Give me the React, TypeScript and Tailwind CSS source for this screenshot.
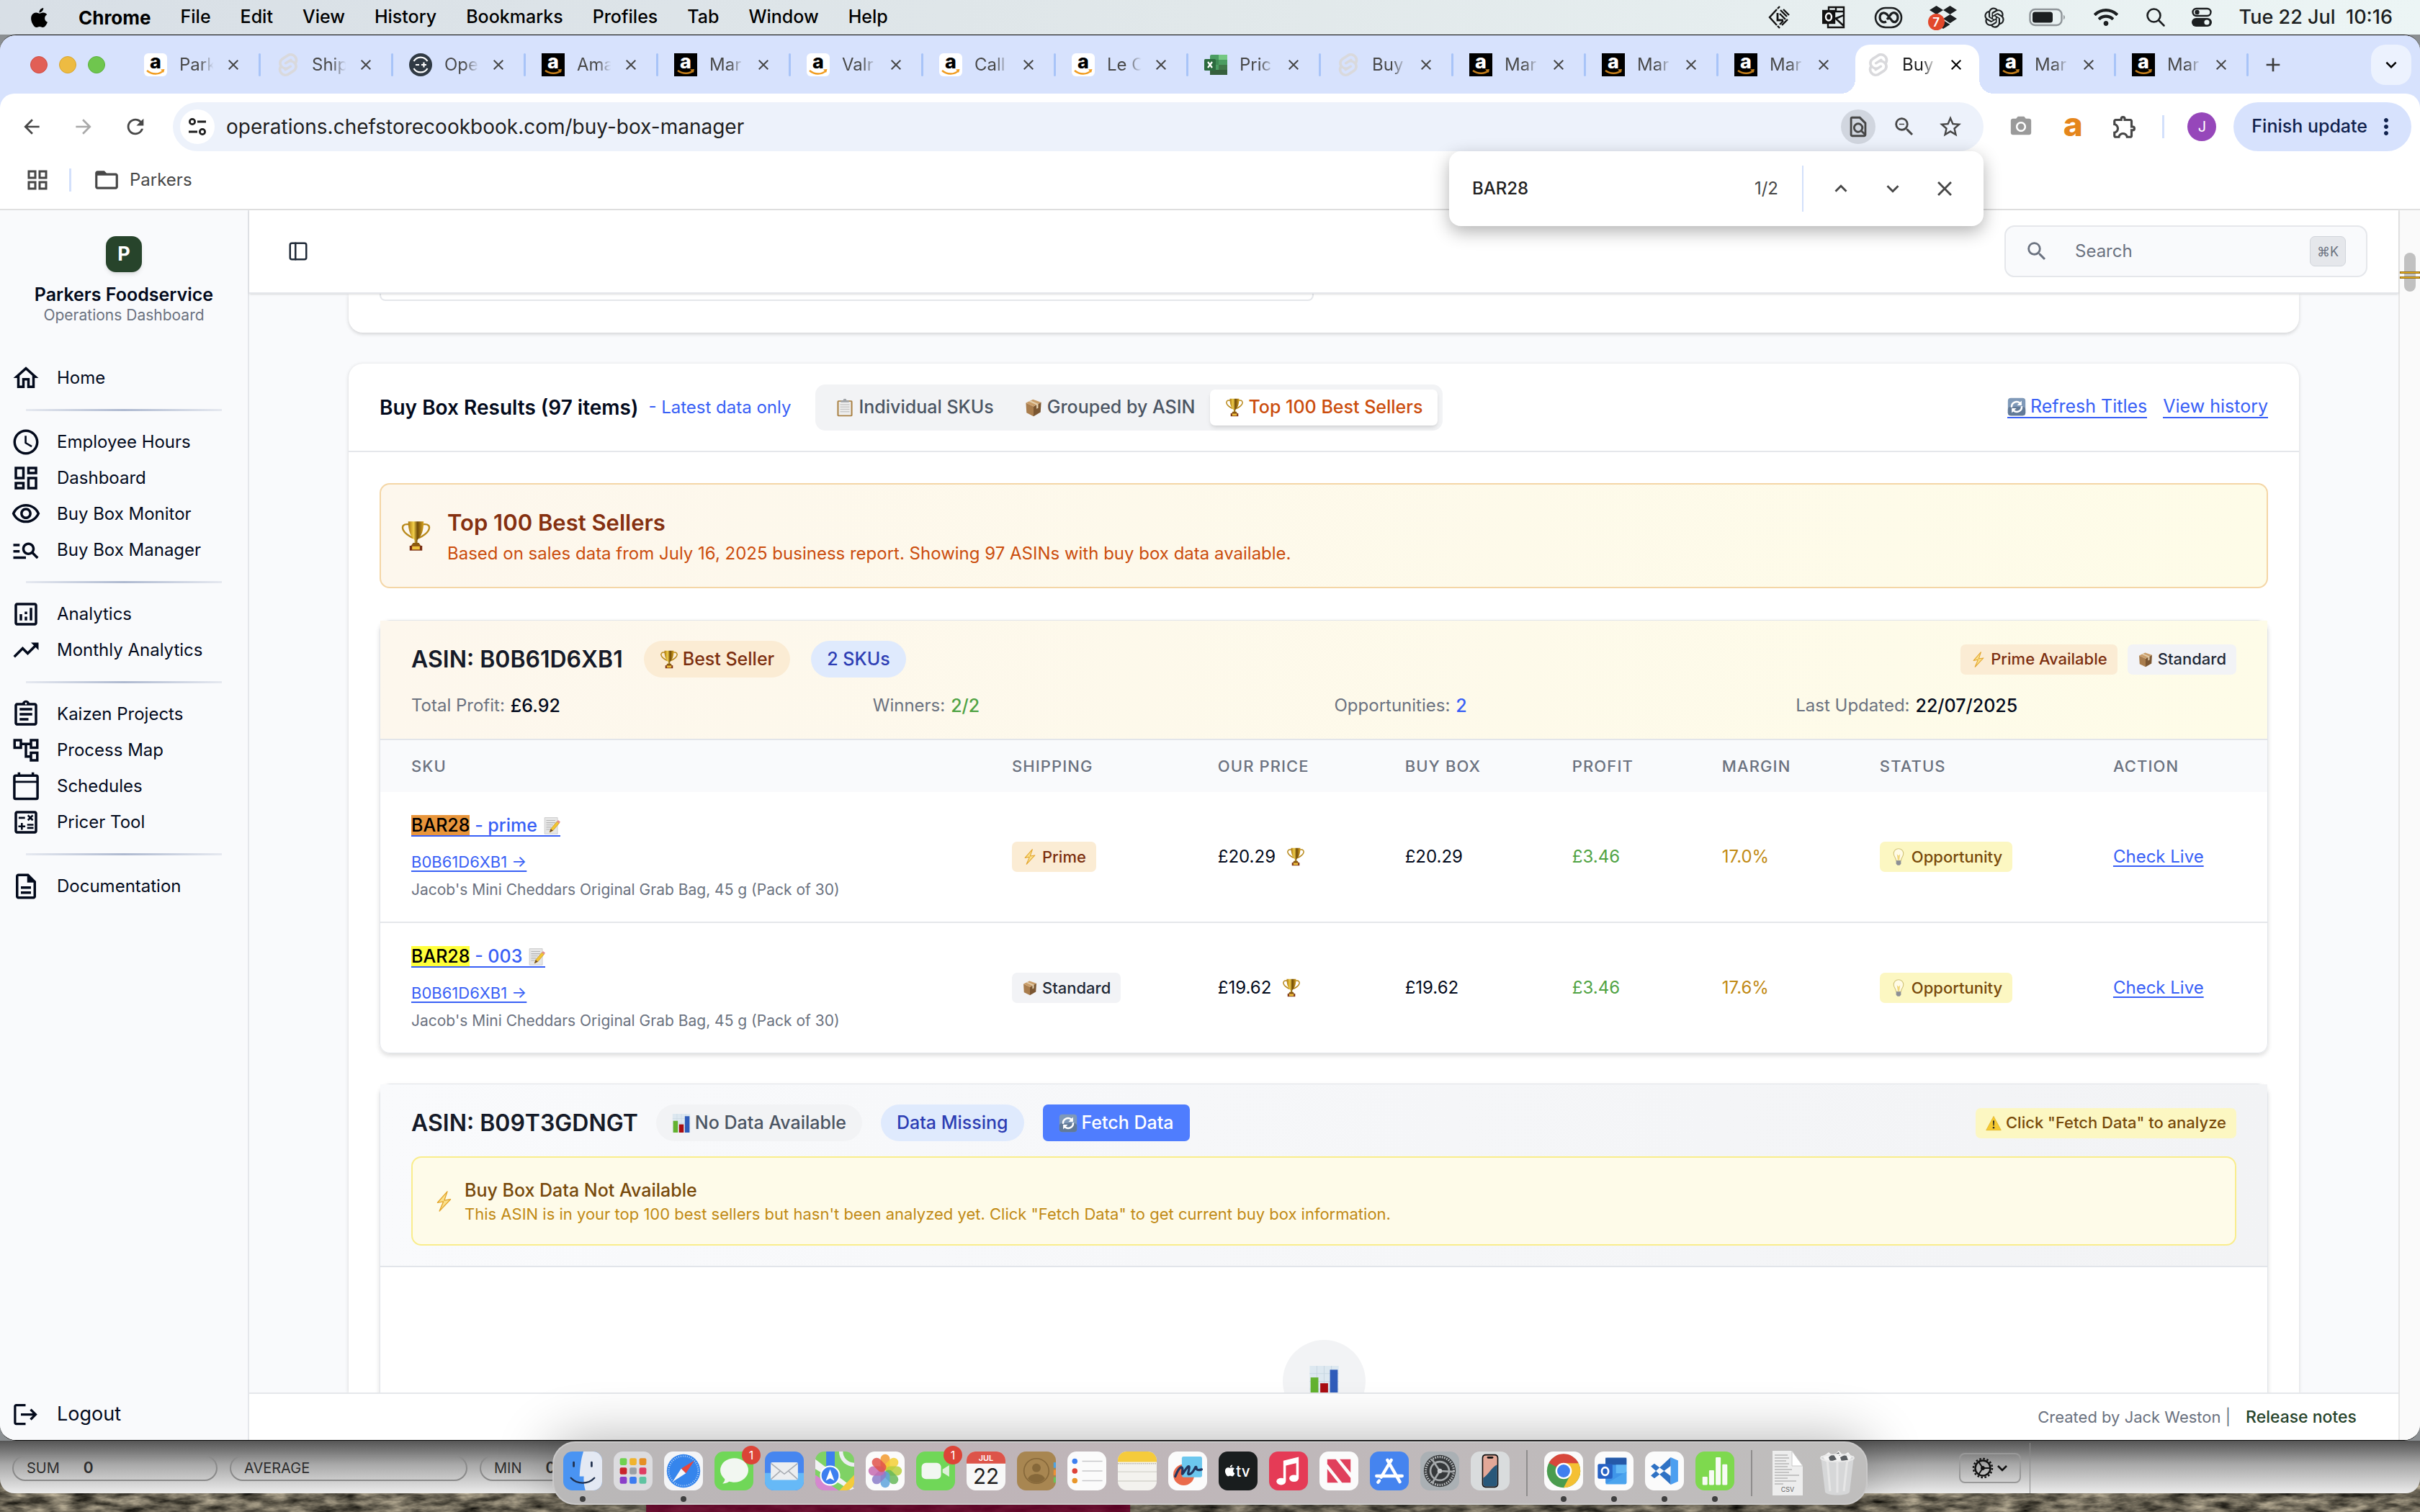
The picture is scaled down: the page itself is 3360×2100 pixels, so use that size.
import React from "react";
import {
  MdOutlineHome, MdOutlineSchedule, MdOutlineDashboard, MdOutlineVisibility, MdManageSearch,
  MdOutlineAnalytics, MdTrendingUp, MdOutlineAssignment, MdOutlineAccountTree,
  MdOutlineCalculate, MdOutlineDescription, MdLogout, MdArrowBack, MdArrowForward, MdRefresh,
  MdOutlineFindInPage, MdZoomOut, MdStarOutline, MdPhotoCamera, MdOutlineExtension, MdMoreVert,
  MdExpandMore, MdExpandLess, MdClose, MdAdd, MdFolderOpen, MdOutlineGridView, MdSearch,
} from "react-icons/md";
import { FaApple, FaDropbox, FaWifi } from "react-icons/fa";
import { AiOutlineOpenAI } from "react-icons/ai";
import { SiSvelte } from "react-icons/si";
import { PanelLeft } from "lucide-react";

/* ---------- pictograms ---------- */

type IconProps = { className?: string };

const Trophy = ({ className = "size-[26px]" }: IconProps) => (
  <svg viewBox="0 0 32 32" className={className} aria-hidden="true">
    <defs>
      <linearGradient id="cup" x1="0" x2="1" y1="0" y2="0">
        <stop offset="0" stopColor="#a8740c" /><stop offset=".35" stopColor="#f2cf4a" />
        <stop offset=".6" stopColor="#6f4a08" /><stop offset="1" stopColor="#d9a520" />
      </linearGradient>
    </defs>
    <path d="M9 4C3 3 1 6 3 10c2 4 6 6 10 8M23 4c6-1 8 2 6 6-2 4-6 6-10 8" fill="none" stroke="#b98a1c" strokeWidth="1.8" />
    <path d="M8 1h16c0 9-2 15-6.500 19v4h-3v-4C10 16 8 10 8 1z" fill="url(#cup)" />
    <path d="M13 23h6l2 3H11z" fill="#8a5a10" />
    <path d="M9.500 26h13v5h-13z" fill="#7a2e12" />
    <path d="M12 26.500h8v3.500h-8z" fill="#edc23c" />
  </svg>
);

const Box = ({ className = "size-[26px]" }: IconProps) => (
  <svg viewBox="0 0 32 32" className={className} aria-hidden="true">
    <path d="M3 8l13 6v17L4 25z" fill="#a97d4d" />
    <path d="M29 7L16 14v17l12-7z" fill="#7b5631" />
    <path d="M3 8l12-6 14 5-13 7z" fill="#c99d69" />
    <path d="M8 5.500l13 5.800v7l3-1.500v-7L11 4z" fill="#e3cfae" />
  </svg>
);

const Bolt = ({ className = "size-[22px]" }: IconProps) => (
  <svg viewBox="0 0 32 32" className={className} aria-hidden="true">
    <path d="M21 1L6 18l9-1.500L9 31l17-18-9.500 1.500z" fill="#fae08a" stroke="#e3a52c" strokeWidth="1.500" strokeLinejoin="round" />
  </svg>
);

const Clipboard = ({ className = "size-[26px]" }: IconProps) => (
  <svg viewBox="0 0 32 32" className={className} aria-hidden="true">
    <rect x="3" y="4" width="26" height="27" rx="2" fill="#a98043" />
    <rect x="5.500" y="6" width="21" height="23" fill="#eeeeee" />
    <path d="M8 11h16M8 15h16M8 19h16M8 23h16" stroke="#c9c9c9" strokeWidth="1.800" />
    <path d="M9 7V4h4a3 3 0 016 0h4v3z" fill="#9fa3a8" />
  </svg>
);

const RefreshTile = ({ className = "size-[26px]" }: IconProps) => (
  <svg viewBox="0 0 32 32" className={className} aria-hidden="true">
    <rect x="1" y="1" width="30" height="30" rx="5" fill="#7f99b8" />
    <rect x="1" y="16" width="30" height="15" rx="5" fill="#627a97" />
    <path d="M7.500 17a8.500 8.500 0 0114-7.500M24.500 15a8.500 8.500 0 01-14 7.500" fill="none" stroke="#fff" strokeWidth="3" />
    <path d="M24.500 5.500v8h-8zM7.500 26.500v-8h8z" fill="#fff" />
  </svg>
);

const Memo = ({ className = "size-[26px]" }: IconProps) => (
  <svg viewBox="0 0 32 32" className={className} aria-hidden="true">
    <path d="M4 2h23v29H4z" fill="#e6e6e6" stroke="#c4c4c4" />
    <path d="M7 7h16M7 11h16M7 15h12M7 19h9M7 23h7" stroke="#b5b5b5" strokeWidth="1.400" />
    <path d="M13 28l2-6L26 9l4 3-11 13z" fill="#f3c532" stroke="#b98a1c" strokeWidth=".8" />
    <path d="M26 9l2-2.500 4 3L30 12z" fill="#e58b8b" />
    <path d="M13 28l2-6 4 3z" fill="#6b4b2a" />
  </svg>
);

const Bulb = ({ className = "size-[24px]" }: IconProps) => (
  <svg viewBox="0 0 32 32" className={className} aria-hidden="true">
    <path d="M16 1a9 9 0 00-9 9c0 5 4 8 4.500 13h9C21 18 25 15 25 10a9 9 0 00-9-9z" fill="#fffbe6" stroke="#d2c47a" strokeWidth="1.500" />
    <path d="M13 11l3 3 3-3-1.500 11h-3z" fill="#f0d67c" />
    <path d="M11.500 23h9v6l-2.500 2.500h-4L11.500 29z" fill="#8d9096" />
  </svg>
);

const BarChart = ({ className = "size-[26px]" }: IconProps) => (
  <svg viewBox="0 0 32 32" className={className} aria-hidden="true">
    <rect x="1" y="0" width="30" height="32" fill="#dde8f0" />
    <path d="M1 8h30M1 16h30M1 24h30M8.500 0v32M16 0v32M23.500 0v32" stroke="#c9d7e2" strokeWidth=".8" />
    <path d="M2 12h8v20H2z" fill="#63b22f" />
    <path d="M12 18h8v14h-8z" fill="#a90d12" />
    <path d="M22 4h8v28h-8z" fill="#2f5cba" />
  </svg>
);

const Warning = ({ className = "size-[22px]" }: IconProps) => (
  <svg viewBox="0 0 32 32" className={className} aria-hidden="true">
    <path d="M16 2l15 28H1z" fill="#f5c92f" stroke="#e0ae1d" strokeLinejoin="round" />
    <path d="M14.500 11h3l-.6 10h-1.800z" fill="#222" /><circle cx="16" cy="25" r="1.800" fill="#222" />
  </svg>
);

const CalendarOutline = ({ className }: IconProps) => (
  <svg viewBox="0 0 24 24" className={className} fill="none" stroke="currentColor" strokeWidth="2" aria-hidden="true">
    <rect x="2.800" y="3.500" width="18.400" height="18.500" rx="1" />
    <path d="M3 8.500h18" strokeWidth="1.600" /><path d="M6.500 1v3M17.500 1v3" />
  </svg>
);

/* ---------- tab favicons ---------- */

const AmazonLight = () => (
  <svg viewBox="0 0 32 32" className="size-8 shrink-0 overflow-visible">
    <rect width="32" height="32" rx="6" fill="#fff" />
    <text x="16" y="21" textAnchor="middle" fontFamily="Inter, sans-serif" fontWeight="800" fontSize="27" fill="#000">a</text>
    <path d="M4 24c7 6 17 6 23 0" fill="none" stroke="#f19c1f" strokeWidth="2.400" />
    <path d="M23 22.500l5.500-.5-1.500 5z" fill="#f19c1f" />
  </svg>
);

const AmazonDark = () => (
  <svg viewBox="0 0 32 32" className="size-8 shrink-0 overflow-visible">
    <rect width="32" height="32" fill="#000" />
    <text x="16" y="21" textAnchor="middle" fontFamily="Inter, sans-serif" fontWeight="800" fontSize="27" fill="#fff">a</text>
    <path d="M5 24c7 5 16 5 22 0" fill="none" stroke="#c47f1c" strokeWidth="2.600" />
    <path d="M22 22.500l6-.5-1.500 5z" fill="#c47f1c" />
  </svg>
);

const SvelteMark = () => <SiSvelte className="size-8 shrink-0 text-[#d9d9dc]" />;

const OpsMark = () => (
  <svg viewBox="0 0 32 32" className="size-8 shrink-0">
    <circle cx="16" cy="16" r="16" fill="#303a44" />
    <path d="M6.500 11a11 11 0 0119 0M6.500 21a11 11 0 0019 0" fill="none" stroke="#fff" strokeWidth="2.200" />
    <path d="M9 16h5M17 16h7M20.500 12.500v7" stroke="#fff" strokeWidth="2.200" />
  </svg>
);

const ExcelMark = () => (
  <svg viewBox="0 0 32 32" className="size-8 shrink-0">
    <rect x="8" y="2" width="24" height="28" rx="2" fill="#4c9d62" />
    <path d="M20 2h12v7H20z" fill="#75c883" /><path d="M8 9h12v7H8z" fill="#3f8a54" />
    <path d="M20 16h12v7H20z" fill="#41784a" /><path d="M8 23h24v7H8z" fill="#365f3c" />
    <rect x="0" y="8" width="16" height="16" rx="1.500" fill="#2c6b3e" />
    <path d="M5 12l6 8M11 12l-6 8" stroke="#fff" strokeWidth="2.200" />
  </svg>
);

const tabs = [
  { t: "Park", I: AmazonLight }, { t: "Ship", I: SvelteMark }, { t: "Ope", I: OpsMark },
  { t: "Ama", I: AmazonDark }, { t: "Mar", I: AmazonDark }, { t: "Valr", I: AmazonLight },
  { t: "Call", I: AmazonLight }, { t: "Le C", I: AmazonLight }, { t: "Pric", I: ExcelMark },
  { t: "Buy", I: SvelteMark }, { t: "Mar", I: AmazonDark }, { t: "Mar", I: AmazonDark },
  { t: "Mar", I: AmazonDark }, { t: "Buy", I: SvelteMark, active: true },
  { t: "Mar", I: AmazonDark }, { t: "Mar", I: AmazonDark },
];

/* ---------- system menu bar ---------- */

const MenuBar = () => (
  <header className="flex h-12 shrink-0 items-center bg-linear-to-r from-[#d8dfe6] via-[#e1e8ea] to-[#ecf5f5] pr-[38px] pl-[39px] text-[25px] text-black">
    <FaApple className="size-[31px]" />
    <nav className="ml-[39px] flex items-center gap-[41px]">
      <button className="text-[26px] font-bold">Chrome</button>
      {["File", "Edit", "View", "History", "Bookmarks", "Profiles", "Tab", "Window", "Help"].map((m) => (
        <button key={m} className="font-medium">{m}</button>
      ))}
    </nav>
    <div className="ml-auto flex items-center text-[#1c1f21]">
      <svg viewBox="0 0 32 32" className="size-8" fill="none" stroke="#111" strokeWidth="2.400">
        <path d="M13 5L3 16l10 11M17 1l-3 3M17 31l-3-3M22 5l8 8M18 6l9 9M17 11l8 8M20 27l8-8M17 26l5-5" /><path d="M14 10v10h8" strokeWidth="2.800" />
      </svg>
      <svg viewBox="0 0 32 32" className="ml-[44px] size-8" fill="none" stroke="#111" strokeWidth="2.400">
        <path d="M9 8V2h21v28H8v-5M9 8h21M19 2v6M19 18l11-5M19 18l11 10M17 18l13-5" /><rect x="1" y="7" width="16" height="17" fill="#111" /><ellipse cx="9" cy="15.500" rx="4" ry="5" stroke="#fff" />
      </svg>
      <svg viewBox="0 0 40 32" className="ml-[40px] h-8 w-10" fill="none" stroke="#1c1f21" strokeWidth="3.200">
        <path d="M16 3h8a14 13.500 0 010 27h-8a14 13.500 0 010-27z" strokeWidth="2.600" />
        <path d="M17 22c-4 2-9 0-9-6s6-8 10-4l7 9c4 4 8 0 8-5s-5-8-9-5l-6 8" />
      </svg>
      <div className="relative ml-[37px]">
        <FaDropbox className="size-[38px]" />
        <span className="absolute top-[14px] left-[-2px] grid size-[23px] place-items-center rounded-full bg-[#e2492c] text-[17px] font-semibold text-white">7</span>
      </div>
      <AiOutlineOpenAI className="ml-[34px] size-9" />
      <svg viewBox="0 0 52 26" className="ml-[30px] h-[26px] w-[52px]">
        <rect x="1.500" y="2" width="44" height="22" rx="7" fill="none" stroke="#8f9599" strokeWidth="2.400" />
        <rect x="5" y="5.500" width="28" height="15" rx="3.500" fill="#1c1f21" /><path d="M48 9.500q4 3.500 0 7z" fill="#8f9599" />
      </svg>
      <FaWifi className="ml-[38px] size-[34px]" />
      <svg viewBox="0 0 28 28" className="ml-[38px] size-[28px]" fill="none" stroke="#1c1f21" strokeWidth="2.600" strokeLinecap="round">
        <circle cx="11.500" cy="11.500" r="9" /><path d="M18.500 18.500l7 7" />
      </svg>
      <svg viewBox="0 0 28 28" className="ml-[36px] size-[28px]">
        <rect x="1.500" y="2" width="25" height="10" rx="5" fill="none" stroke="#1c1f21" strokeWidth="2.400" /><circle cx="7.500" cy="7" r="3.200" fill="#1c1f21" />
        <rect x="0" y="15" width="28" height="12" rx="6" fill="#1c1f21" /><circle cx="21" cy="21" r="3.600" fill="#ecf5f5" />
      </svg>
      <time className="ml-[38px] text-[27px] font-medium whitespace-pre">Tue 22 Jul  10:16</time>
    </div>
  </header>
);

/* ---------- browser chrome ---------- */

const TabStrip = () => (
  <div className="flex h-[81px] shrink-0 items-stretch bg-[#d7e2fd] pr-3 pl-[42px]">
    <div className="flex items-center gap-4">
      <button aria-label="Close window" className="size-6 rounded-full border border-[#d04c42] bg-[#e15f56]" />
      <button aria-label="Minimise window" className="size-6 rounded-full border border-[#d9a52c] bg-[#edbb42]" />
      <button aria-label="Zoom window" className="size-6 rounded-full border border-[#5cb23c] bg-[#6fc64e]" />
    </div>
    <div role="tablist" className="ml-8 flex">
      {tabs.map(({ t, I, active }, i) => (
        <div key={i} role="tab" aria-selected={!!active} className="relative flex w-[184px] items-center pl-[22px]">
          {active && (
            <div className="absolute inset-x-1.5 top-[13px] bottom-0 rounded-t-[20px] bg-white">
              <span className="absolute bottom-0 left-[-20px] size-5 bg-[radial-gradient(circle_at_0_0,transparent_20px,#fff_20px)]" />
              <span className="absolute right-[-20px] bottom-0 size-5 bg-[radial-gradient(circle_at_100%_0,transparent_20px,#fff_20px)]" />
            </div>
          )}
          <span className="relative"><I /></span>
          <span className={`relative ml-[17px] w-[56px] bg-linear-to-r from-50% to-transparent to-85% bg-clip-text text-[24px] whitespace-nowrap text-transparent ${active ? "from-[#1f1f1f]" : "from-[#474747]"}`}>{t}</span>
          <button aria-label="Close tab" className={`relative ml-[7px] ${active ? "text-black" : "text-[#474747]"}`}><MdClose className="size-[24px]" /></button>
          {i !== 12 && !active && <span className="ml-auto h-8 w-[3px] rounded-full bg-[#a8c4f8]" />}
        </div>
      ))}
    </div>
    <button aria-label="New tab" className="grid w-[68px] place-items-center text-[#3c3c3c]"><MdAdd className="size-8" /></button>
    <button aria-label="Search tabs" className="my-auto ml-auto grid size-14 place-items-center rounded-[20px] bg-[#ecf2fe]"><MdExpandMore className="size-[30px]" /></button>
  </div>
);

const Toolbar = () => (
  <div className="bg-[#d7e2fd]">
    <div className="flex h-20 items-end rounded-t-[20px] bg-white pr-3 pl-2 text-[#474747]">
      <div className="flex h-[68px] items-center">
        <button aria-label="Back" className="grid w-[72px] place-items-center"><MdArrowBack className="size-8" /></button>
        <button aria-label="Forward" className="grid w-[72px] place-items-center text-[#a9a9a9]"><MdArrowForward className="size-8" /></button>
        <button aria-label="Reload" className="grid w-[72px] place-items-center"><MdRefresh className="size-[34px]" /></button>
      </div>
      <div className="ml-4 flex h-[68px] flex-1 items-center rounded-full bg-[#edf2fb] pr-[14px] pl-[10px]">
        <button aria-label="Site information" className="grid size-12 place-items-center rounded-full bg-white">
          <svg viewBox="0 0 28 28" className="size-7" fill="none" stroke="#1f1f1f" strokeWidth="2.800">
            <circle cx="7" cy="7" r="3.600" /><path d="M14 7h12M2 21h12" /><circle cx="21" cy="21" r="3.600" />
          </svg>
        </button>
        <input type="text" aria-label="Address" defaultValue="operations.chefstorecookbook.com/buy-box-manager" className="ml-4 min-w-0 flex-1 bg-transparent text-[28px] text-[#1f1f1f] outline-none" />
        <span className="mr-2 grid size-12 place-items-center rounded-full bg-[#d1d6df]"><MdOutlineFindInPage className="size-[34px]" /></span>
        <button aria-label="Zoom" className="grid w-16 place-items-center"><MdZoomOut className="size-[34px]" /></button>
        <button aria-label="Bookmark this tab" className="grid w-16 place-items-center"><MdStarOutline className="size-[36px]" /></button>
      </div>
      <div className="ml-4 flex h-[68px] items-center">
        <button aria-label="Screenshot" className="grid w-[72px] place-items-center text-[#9a9a9a]"><MdPhotoCamera className="size-[34px]" /></button>
        <button aria-label="Seller extension" className="w-[72px] pb-2 text-center text-[46px] leading-[60px] font-extrabold text-[#e5861b]">a</button>
        <button aria-label="Extensions" className="grid w-[72px] place-items-center"><MdOutlineExtension className="size-[38px]" /></button>
        <span className="ml-4 h-8 w-[3px] bg-[#d3e0fb]" />
        <button aria-label="Profile" className="ml-8 grid size-10 place-items-center rounded-full bg-[#9647ba] text-[20px] text-white">J</button>
        <button className="ml-6 flex h-[68px] items-center rounded-full bg-[#d7e2fd] pr-[17px] pl-[25px] text-[25px] font-medium text-[#10224d]">
          Finish update<MdMoreVert className="ml-2 size-9" />
        </button>
      </div>
    </div>
  </div>
);

const BookmarkBar = () => (
  <div className="flex h-[82px] shrink-0 items-center border-b-2 border-[#e0e0e0] bg-white pl-[34px] text-[24px] text-[#474747]">
    <button aria-label="Apps"><MdOutlineGridView className="size-9" /></button>
    <span className="ml-[26px] h-8 w-[3px] bg-[#d3e0fb]" />
    <button className="ml-[30px] flex items-center gap-[13px]"><MdFolderOpen className="size-[38px]" />Parkers</button>
  </div>
);

const FindBar = () => (
  <div role="search" className="absolute top-[162px] right-[606px] z-20 flex h-[104px] w-[742px] items-center rounded-[16px] bg-white pr-[18px] pl-8 text-[24px] text-[#474747] shadow-[0_8px_24px_rgba(0,0,0,0.3)]">
    <input type="text" aria-label="Find in page" defaultValue="BAR28" className="min-w-0 flex-1 bg-transparent font-medium text-[#1f1f1f] outline-none" />
    <output>1/2</output>
    <span className="ml-[33px] h-16 w-[2px] bg-[#d3e0fb]" />
    <button aria-label="Previous match" className="ml-4 grid w-[72px] place-items-center"><MdExpandLess className="size-[34px]" /></button>
    <button aria-label="Next match" className="grid w-[72px] place-items-center"><MdExpandMore className="size-[34px]" /></button>
    <button aria-label="Close find bar" className="grid w-[72px] place-items-center"><MdClose className="size-[34px]" /></button>
  </div>
);

/* ---------- dashboard ---------- */

const navGroups = [
  [{ l: "Home", I: MdOutlineHome }],
  [{ l: "Employee Hours", I: MdOutlineSchedule }, { l: "Dashboard", I: MdOutlineDashboard }, { l: "Buy Box Monitor", I: MdOutlineVisibility }, { l: "Buy Box Manager", I: MdManageSearch }],
  [{ l: "Analytics", I: MdOutlineAnalytics }, { l: "Monthly Analytics", I: MdTrendingUp }],
  [{ l: "Kaizen Projects", I: MdOutlineAssignment }, { l: "Process Map", I: MdOutlineAccountTree }, { l: "Schedules", I: CalendarOutline }, { l: "Pricer Tool", I: MdOutlineCalculate }],
  [{ l: "Documentation", I: MdOutlineDescription }],
];

const Sidebar = () => (
  <aside className="flex w-[346px] shrink-0 flex-col border-r-2 border-[#e5e7eb] bg-[#f9fafc] text-[#030a1c]">
    <div className="flex flex-col items-center pt-9">
      <div className="grid size-[50px] place-items-center rounded-[14px] bg-[#27442b] text-[27px] font-bold text-white shadow-md">P</div>
      <h1 className="mt-[15px] text-[25px] leading-8 font-semibold">Parkers Foodservice</h1>
      <p className="text-[21px] leading-[26px] text-[#6b7280]">Operations Dashboard</p>
    </div>
    <nav className="mt-[49px]">
      {navGroups.map((g, gi) => (
        <React.Fragment key={gi}>
          {gi > 0 && <hr className="mx-9 my-[18px] h-[3px] border-0 bg-linear-to-r from-[#e6e9f0] via-[#aeb9d0] to-[#e6e9f0]" />}
          {g.map(({ l, I }) => (
            <a key={l} href="#" className="flex h-[50px] items-center gap-[22px] pl-[15px] text-[24px]">
              <I className="size-[42px]" />{l}
            </a>
          ))}
        </React.Fragment>
      ))}
    </nav>
    <button className="mt-auto mb-[11px] flex h-[50px] items-center gap-6 pl-4 text-[27px]"><MdLogout className="size-[39px]" />Logout</button>
  </aside>
);

const TopBar = () => (
  <div className="z-10 flex h-[116px] shrink-0 items-center border-b-2 border-[#e5e7eb] bg-white pr-[43px] pl-[53px] shadow-sm">
    <button aria-label="Toggle sidebar" className="text-[#1f2937]"><PanelLeft className="size-[30px]" strokeWidth={2} /></button>
    <label className="ml-auto flex h-[72px] w-[504px] items-center rounded-[14px] border-2 border-[#e5e7eb] bg-[#f9fafc] pr-7 pl-[26px]">
      <MdSearch className="size-[34px] text-[#6b7280]" />
      <input type="search" placeholder="Search" aria-label="Search" className="ml-[36px] min-w-0 flex-1 bg-transparent text-[24px] outline-none placeholder:text-[#6b7280]" />
      <kbd className="grid h-[42px] w-[50px] place-items-center rounded-[7px] border border-[#d1d5db] bg-[#e5e7eb] font-[Inter,sans-serif] text-[18px] text-[#6b7280]">⌘K</kbd>
    </label>
  </div>
);

const Pill = ({ className, children }: { className: string; children: React.ReactNode }) => (
  <span className={`flex h-[51px] items-center gap-[6px] rounded-full px-[22px] text-[25px] font-medium ${className}`}>{children}</span>
);

const Chip = ({ className, children }: { className: string; children: React.ReactNode }) => (
  <span className={`inline-flex h-[42px] items-center gap-[6px] rounded-[7px] px-[14px] align-middle text-[22px] font-medium ${className}`}>{children}</span>
);

const orange = "bg-[#fbecd4] text-[#7c2f10]";
const grey = "bg-[#f2f3f6] text-[#1f2937]";
const yellow = "bg-[#fcf7c2] text-[#784a0b]";

const rows = [
  { sku: " - prime", mark: "bg-[#e8953b]", prime: true, price: "£20.29", margin: "17.0%" },
  { sku: " - 003", mark: "bg-[#ffff3a]", prime: false, price: "£19.62", margin: "17.6%" },
];

const columns = [
  { h: "SKU", w: "w-[31.83%]" }, { h: "Shipping", w: "w-[10.91%]" }, { h: "Our Price", w: "w-[9.92%]" },
  { h: "Buy Box", w: "w-[8.86%]" }, { h: "Profit", w: "w-[7.94%]" }, { h: "Margin", w: "w-[8.36%]" },
  { h: "Status", w: "w-[12.37%]" }, { h: "Action", w: "w-[9.81%]" },
];

const SkuTable = () => (
  <table className="w-full table-fixed text-left text-[24px] text-[#030a1c]">
    <thead className="bg-[#f9fafc]">
      <tr>
        {columns.map((c) => (
          <th key={c.h} scope="col" className={`h-[72px] pl-[43px] text-[22px] font-medium tracking-wider text-[#6b7280] uppercase ${c.w}`}>{c.h}</th>
        ))}
      </tr>
    </thead>
    <tbody>
      {rows.map((r, i) => (
        <tr key={i} className={i > 0 ? "border-t-2 border-[#e5e7eb]" : ""}>
          <td className="py-[29px] pl-[43px]">
            <a href="#" className="flex h-9 items-center text-[25px] leading-[30px] font-medium whitespace-pre text-[#3860f6]">
              <span className="flex items-center border-b-2 border-[#3860f6] leading-[28px]">
                <mark className={`text-black ${r.mark}`}>BAR28</mark>{r.sku}<Memo className="ml-[7px] size-[25px]" />
              </span>
            </a>
            <a href="#" className="mt-[17px] block w-fit text-[22px] leading-[30px] text-[#3860f6] underline underline-offset-4">B0B61D6XB1 →</a>
            <p className="mt-[9px] text-[21px] leading-[30px] text-[#6b7280]">Jacob's Mini Cheddars Original Grab Bag, 45 g (Pack of 30)</p>
          </td>
          <td className="pl-[43px]">{r.prime ? <Chip className={orange}><Bolt />Prime</Chip> : <Chip className={grey}><Box className="size-[22px]" />Standard</Chip>}</td>
          <td className="pl-[43px]"><span className="flex items-center gap-[15px]">{r.price}<Trophy /></span></td>
          <td className="pl-[43px]">{r.price}</td>
          <td className="pl-[43px] text-[#50a344]">£3.46</td>
          <td className="pl-[43px] text-[#c18a14]">{r.margin}</td>
          <td className="pl-[43px]"><Chip className={yellow}><Bulb />Opportunity</Chip></td>
          <td className="pl-[43px]"><a href="#" className="text-[#3860f6] underline underline-offset-4">Check Live</a></td>
        </tr>
      ))}
    </tbody>
  </table>
);

const stats = [
  { l: "Total Profit:", v: "£6.92", c: "text-[#030a1c]" }, { l: "Winners:", v: "2/2", c: "text-[#50a344]" },
  { l: "Opportunities:", v: "2", c: "text-[#3860f6]" }, { l: "Last Updated:", v: "22/07/2025", c: "text-[#030a1c]" },
];

const BestSellerCard = () => (
  <article className="mt-11 rounded-[14px] border border-[#e2e5ea] shadow-[0_3px_6px_rgba(0,0,0,0.14)]">
    <header className="border-b-2 border-[#e2e5ea] bg-linear-to-r from-[#fdf7ed] to-[#fefce8] px-[43px] pt-7 pb-[28px]">
      <div className="flex items-center">
        <h3 className="text-[32px] font-semibold text-[#151a28]">ASIN: B0B61D6XB1</h3>
        <div className="ml-[29px] flex gap-[29px]">
          <Pill className={orange}><Trophy />Best Seller</Pill>
          <Pill className="bg-[#dfeafd] text-[#2d3eb4]">2 SKUs</Pill>
        </div>
        <div className="ml-auto flex gap-[14px]">
          <Chip className={orange}><Bolt />Prime Available</Chip>
          <Chip className={grey}><Box className="size-[22px]" />Standard</Chip>
        </div>
      </div>
      <dl className="mt-[21px] grid grid-cols-4 gap-[29px] text-[24px] leading-9">
        {stats.map((s) => (
          <div key={s.l} className="flex gap-2"><dt className="text-[#6b7280]">{s.l}</dt><dd className={`text-[25px] font-medium ${s.c}`}>{s.v}</dd></div>
        ))}
      </dl>
    </header>
    <SkuTable />
  </article>
);

const MissingCard = () => (
  <article className="mt-[42px] rounded-[14px] border border-[#e2e5ea] shadow-[0_3px_6px_rgba(0,0,0,0.14)]">
    <header className="border-b-2 border-[#e2e5ea] bg-linear-to-r from-[#f9fafc] to-[#f2f3f5] px-[43px] pt-7 pb-[28px]">
      <div className="flex items-center">
        <h3 className="text-[32px] font-semibold text-[#151a28]">ASIN: B09T3GDNGT</h3>
        <div className="ml-[25px] flex gap-[26px]">
          <Pill className="bg-[#f2f3f5] text-[#4b5563]"><BarChart />No Data Available</Pill>
          <Pill className="bg-[#dfeafd] text-[#2d3eb4]">Data Missing</Pill>
          <button className="flex h-[51px] items-center gap-[6px] rounded-[7px] bg-[#4f7dfe] px-[22px] text-[25px] font-medium text-white"><RefreshTile />Fetch Data</button>
        </div>
        <div className="ml-auto"><Chip className={yellow}><Warning />Click "Fetch Data" to analyze</Chip></div>
      </div>
      <div className="mt-[21px] flex items-center gap-[14px] rounded-[14px] border-2 border-[#f9ed8c] bg-[#fefbe9] px-[29px] py-[27px]">
        <Bolt className="size-[29px]" />
        <div>
          <h4 className="text-[25px] leading-9 font-medium text-[#784a0b]">Buy Box Data Not Available</h4>
          <p className="text-[22px] leading-[30px] text-[#c18a14]">This ASIN is in your top 100 best sellers but hasn't been analyzed yet. Click "Fetch Data" to get current buy box information.</p>
        </div>
      </div>
    </header>
    <div className="flex h-[400px] justify-center pt-[101px]">
      <div className="grid size-[115px] place-items-center rounded-full bg-[#f2f3f5]"><BarChart className="size-[43px]" /></div>
    </div>
  </article>
);

const viewTabs = [
  { l: "Individual SKUs", I: Clipboard }, { l: "Grouped by ASIN", I: Box }, { l: "Top 100 Best Sellers", I: Trophy },
];

const Results = () => (
  <section className="mt-[43px] min-h-0 flex-1 rounded-t-[20px] bg-white shadow-[0_1px_5px_rgba(0,0,0,0.16)]">
    <header className="flex h-[123px] items-center border-b-2 border-[#e5e7eb] px-[43px]">
      <h2 className="text-[28px] font-semibold text-[#030a1c]">Buy Box Results (97 items)</h2>
      <span className="ml-[14px] text-[24px] text-[#3860f6]">- Latest data only</span>
      <div className="ml-[34px] flex rounded-[14px] bg-[#f2f3f5] p-[7px]">
        {viewTabs.map(({ l, I }, i) => (
          <button key={l} className={`flex h-[50px] items-center gap-[6px] rounded-[7px] px-[21px] text-[25px] font-medium ${i === 2 ? "bg-white text-[#cb4d0d] shadow-md" : "text-[#4b5563]"}`}><I />{l}</button>
        ))}
      </div>
      <div className="ml-auto flex gap-[22px] text-[25px] text-[#3860f6]">
        <a href="#" className="flex h-[30px] items-center gap-[6px] border-b-2 border-[#3860f6]"><RefreshTile />Refresh Titles</a>
        <a href="#" className="flex h-[30px] items-center border-b-2 border-[#3860f6]">View history</a>
      </div>
    </header>
    <div className="px-[43px] pt-[43px]">
      <div className="flex items-center gap-[22px] rounded-[14px] border-2 border-[#f4d6a6] bg-linear-to-r from-[#fdf7ed] to-[#fefce8] px-[27px] py-7">
        <Trophy className="size-[43px]" />
        <div>
          <h3 className="text-[31px] leading-[50px] font-semibold text-[#853010]">Top 100 Best Sellers</h3>
          <p className="text-[24px] leading-9 text-[#cb4d0d]">Based on sales data from July 16, 2025 business report. Showing 97 ASINs with buy box data available.</p>
        </div>
      </div>
      <BestSellerCard />
      <MissingCard />
    </div>
  </section>
);

const Dashboard = () => (
  <div className="flex min-h-0 flex-1">
    <Sidebar />
    <div className="flex min-w-0 flex-1 flex-col bg-[#f9fafc]">
      <TopBar />
      <main className="flex min-h-0 flex-1 flex-col overflow-hidden px-[138px]">
        <section className="grid shrink-0 grid-cols-2 gap-[29px] rounded-b-[20px] bg-white px-[43px] pb-[44px] shadow-[0_2px_5px_rgba(0,0,0,0.16)]">
          <div className="h-[10px] rounded-b-[8px] border-x-2 border-b-2 border-[#e5e7eb]" />
        </section>
        <Results />
      </main>
      <footer className="z-10 flex h-[66px] shrink-0 items-center justify-end border-t-2 border-[#e5e7eb] bg-white pr-[58px] text-[22px] text-[#6b7280]">
        Created by Jack Weston |<a href="#" className="ml-[21px] text-[23px] font-medium text-[#27442b]">Release notes</a>
      </footer>
    </div>
    <div className="relative w-[30px] shrink-0 border-l-2 border-[#e6e6e6] bg-[#fafafa]">
      <span className="absolute top-[59px] left-[6px] h-[54px] w-4 rounded-full bg-[#c1c1c1]" />
      <span className="absolute inset-x-0 top-[85px] h-[3px] border border-[#9a6f14] bg-[#e8b420]" />
      <span className="absolute inset-x-0 top-[92px] h-[3px] border border-[#9a6f14] bg-[#e8b420]" />
    </div>
  </div>
);

/* ---------- dock ---------- */

const Tile = ({ bg, children }: { bg: string; children?: React.ReactNode }) => (
  <svg viewBox="0 0 100 100" className="size-[54px]">
    <rect width="100" height="100" rx="23" fill={bg} />
    {children}
  </svg>
);

const spread = [0, 45, 90, 135, 180, 225, 270, 315];
const petals = ["#f29a2e", "#f3cf35", "#b7cf3d", "#67b85a", "#5fa3dc", "#8b7cc9", "#c66bb0", "#e0524a"];
const pads = ["#6fd14f", "#f0b32e", "#e58f25", "#c9242c", "#9aa0a6", "#df3d63", "#8a3fc9", "#3d7cf0", "#5fc3a1"];

const apps: { n: string; run?: boolean; badge?: boolean; el: React.ReactNode }[] = [
  { n: "Finder", run: true, el: <Tile bg="#4a94f2"><path d="M52 0h25a23 23 0 0123 23v54a23 23 0 01-23 23H57c-3-10-5-22-4-36H42C43 40 46 18 52 0z" fill="#e4e9f3" /><path d="M27 28v10M73 28v10" stroke="#20304d" strokeWidth="5" strokeLinecap="round" /><path d="M20 68c16 17 44 17 60 0" fill="none" stroke="#20304d" strokeWidth="4.500" strokeLinecap="round" /></Tile> },
  { n: "Launchpad", el: <Tile bg="#dcdcdf">{pads.map((c, i) => <rect key={c} x={16 + (i % 3) * 25} y={17 + Math.floor(i / 3) * 24} width="18" height="18" rx="4" fill={c} />)}</Tile> },
  { n: "Safari", run: true, el: <Tile bg="#f4f5f7"><circle cx="50" cy="50" r="43" fill="#3585ec" /><circle cx="50" cy="50" r="38" fill="none" stroke="#cfe3fb" strokeWidth="4" strokeDasharray="1.500 4" /><path d="M78 23L56 56 44 44z" fill="#e8463c" /><path d="M22 78l34-22-12-12z" fill="#f5f7fa" /></Tile> },
  { n: "Messages", badge: true, el: <Tile bg="#70d758"><ellipse cx="51" cy="48" rx="36" ry="31" fill="#f2f7f1" /><path d="M26 66c2 8-1 13-6 16 8 1 16-2 20-7z" fill="#f2f7f1" /></Tile> },
  { n: "Mail", el: <Tile bg="#4686f0"><path d="M0 55h100v22a23 23 0 01-23 23H23A23 23 0 010 77z" fill="#66b9f7" /><rect x="15" y="28" width="70" height="45" rx="4" fill="#eceef0" /><path d="M16 31l34 27 34-27M16 71l25-22M84 71L59 49" fill="none" stroke="#a9adb3" strokeWidth="3" /></Tile> },
  { n: "Maps", el: <Tile bg="#7fd265"><path d="M0 60L60 100H23A23 23 0 010 77z" fill="#d587cf" /><path d="M0 20L100 95 90 99 0 45z" fill="#f2f3f4" /><path d="M62 100l38-40v20a22 22 0 01-20 20z" fill="#f4cb3c" /><path d="M28 0h22v60H28z" fill="#3d7ff0" /><path d="M66 0a34 34 0 0034 34" fill="none" stroke="#eceef0" strokeWidth="10" /><circle cx="38" cy="62" r="24" fill="#3d7ff0" stroke="#fff" strokeWidth="4" /><path d="M38 46l11 29-11-6-11 6z" fill="#fff" /></Tile> },
  { n: "Photos", el: <Tile bg="#fbfbfb">{spread.map((a, i) => <rect key={a} x="38" y="7" width="24" height="42" rx="12" fill={petals[i]} opacity=".85" transform={`rotate(${a} 50 50)`} />)}</Tile> },
  { n: "FaceTime", badge: true, el: <Tile bg="#70d758"><rect x="14" y="29" width="50" height="42" rx="11" fill="#f2f7f1" /><path d="M68 46l17-11v30L68 54z" fill="#dff0da" /></Tile> },
  { n: "Calendar", el: <Tile bg="#f8f8f8"><path d="M0 31V23A23 23 0 0123 0h54a23 23 0 0123 23v8z" fill="#dd5449" /><text x="50" y="24" textAnchor="middle" fontFamily="Inter, sans-serif" fontSize="20" fontWeight="600" fill="#fff">JUL</text><text x="50" y="84" textAnchor="middle" fontFamily="Inter, sans-serif" fontSize="55" fill="#222">22</text></Tile> },
  { n: "Contacts", el: <Tile bg="#a88651"><path d="M94 28h6v14h-6z" fill="#4ea3e0" /><path d="M94 47h6v14h-6z" fill="#ed8f35" /><path d="M94 66h6v14h-6z" fill="#6cc25a" /><circle cx="50" cy="50" r="32" fill="none" stroke="#86683a" strokeWidth="3" /><circle cx="50" cy="42" r="11" fill="#86683a" /><path d="M28 70c6-16 38-16 44 0-12 14-32 14-44 0z" fill="#86683a" /></Tile> },
  { n: "Reminders", el: <Tile bg="#fbfbfb"><g strokeWidth="3" stroke="#c9c9cc"><path d="M38 25h52M38 50h52M38 75h52" /></g><circle cx="19" cy="25" r="7" fill="#3d7ff0" /><circle cx="19" cy="50" r="7" fill="#dd4238" /><circle cx="19" cy="75" r="7" fill="#e8962a" /></Tile> },
  { n: "Notes", el: <Tile bg="#f3f2ee"><path d="M0 27V23A23 23 0 0123 0h54a23 23 0 0123 23v4z" fill="#f5cb3b" /><path d="M0 31h100" stroke="#b8b5ab" strokeWidth="3" strokeDasharray="3 2" /><path d="M0 52h100M0 76h100" stroke="#d5d3cc" strokeWidth="2.500" /></Tile> },
  { n: "Freeform", el: <Tile bg="#fbfbfb"><circle cx="40" cy="60" r="27" fill="#ea6a4a" /><rect x="35" y="13" width="52" height="53" rx="4" fill="#6cc7ee" /><path d="M18 64c12-30 22-30 18-8-2 10 16-26 18-16 1 8-8 22 2 18s14-22 16-18c0 6 2 10 14 6" fill="none" stroke="#23365f" strokeWidth="6" strokeLinecap="round" /></Tile> },
  { n: "TV", el: <Tile bg="#191d1e"><FaApple x="12" y="32" size="34" color="#fff" /><text x="45" y="65" fontFamily="Inter, sans-serif" fontSize="38" fontWeight="500" fill="#fff">tv</text></Tile> },
  { n: "Music", el: <Tile bg="#e53b56"><path d="M40 76V26l33-8v50" fill="none" stroke="#fff" strokeWidth="6.500" /><path d="M40 24l33-8v13l-33 8z" fill="#fff" /><ellipse cx="31" cy="77" rx="12" ry="9" fill="#fff" /><ellipse cx="64" cy="69" rx="12" ry="9" fill="#fff" /></Tile> },
  { n: "News", el: <Tile bg="#fbfbfb"><path d="M20 20h22l38 48v12H58L20 32z" fill="#e0405c" /><path d="M52 20h28v34zM20 45v35h28z" fill="#e0405c" /></Tile> },
  { n: "App Store", el: <Tile bg="#4584ef"><g stroke="#fff" strokeWidth="8" strokeLinecap="round"><path d="M55 22L29 66M45 22l32 56M17 63h66M24 75l-3 4" /></g></Tile> },
  { n: "System Settings", el: <Tile bg="#aab0b4"><circle cx="50" cy="50" r="41" fill="#36393b" /><circle cx="50" cy="50" r="36" fill="none" stroke="#b9bcbe" strokeWidth="6" strokeDasharray="3 3" /><circle cx="50" cy="50" r="24" fill="none" stroke="#a5a9ab" strokeWidth="5" /><path d="M50 50L30 20M50 50l36 2M50 50L30 82" stroke="#a5a9ab" strokeWidth="5" /><circle cx="50" cy="50" r="6" fill="#c5c8ca" /></Tile> },
  { n: "iPhone Mirroring", el: <Tile bg="#d9dcdd"><rect x="29" y="7" width="42" height="86" rx="9" fill="#111" /><rect x="32" y="10" width="36" height="80" rx="7" fill="#e3a898" /><path d="M68 34c-16 8-22 26-36 34v15a7 7 0 007 7h22a7 7 0 007-7z" fill="#28587a" /><rect x="42" y="13" width="16" height="5" rx="2.500" fill="#111" /></Tile> },
];

const pinned: { n: string; el: React.ReactNode }[] = [
  { n: "Chrome", el: <Tile bg="#fbfbfb"><circle cx="50" cy="50" r="43" fill="#4a9c4e" /><path d="M50 50L12 29a43 43 0 0176 0z" fill="#d8473b" /><path d="M50 30h38a43 43 0 01-38 63l18-34z" fill="#f4c033" /><circle cx="50" cy="50" r="21" fill="#fff" /><circle cx="50" cy="50" r="16.500" fill="#3f7fee" /></Tile> },
  { n: "Outlook", el: <Tile bg="#fbfbfb"><rect x="28" y="16" width="54" height="68" rx="5" fill="#3f95e8" /><path d="M28 16h54v18H28z" fill="#2559a8" /><path d="M55 34h27v22H55z" fill="#62b8f5" /><path d="M28 84l54-32v27a5 5 0 01-5 5z" fill="#4ba4ee" /><rect x="8" y="32" width="38" height="38" rx="4" fill="#2762c4" /><ellipse cx="27" cy="51" rx="8.500" ry="10" fill="none" stroke="#fff" strokeWidth="5" /></Tile> },
  { n: "Visual Studio Code", el: <Tile bg="#fbfbfb"><path d="M66 15l19 8v54l-19 8z" fill="#4c9ff0" /><path d="M66 15v22L24 69l-9-7zM66 85V63L24 31l-9 7z" fill="#2f72c4" /></Tile> },
  { n: "Numbers", el: <Tile bg="#7ed94e"><g fill="#f7fbf5"><rect x="18" y="65" width="13" height="21" rx="2" /><rect x="35" y="48" width="13" height="38" rx="2" /><rect x="52" y="15" width="13" height="71" rx="2" /><rect x="69" y="33" width="13" height="53" rx="2" /></g></Tile> },
];

const DockItem = ({ n, run, badge, el }: { n: string; run?: boolean; badge?: boolean; el: React.ReactNode }) => (
  <button aria-label={n} className="relative flex h-[88px] w-[70px] justify-center pt-[14px]">
    {el}
    {badge && <span className="absolute top-[6px] right-[-2px] grid size-[26px] place-items-center rounded-full bg-[#dc4437] text-[16px] text-white">1</span>}
    {run && <span className="absolute bottom-1 left-[31px] size-2 rounded-full bg-[#3f3f3f]" />}
  </button>
);

const Dock = () => (
  <div className="absolute bottom-[10px] left-1/2 z-30 flex h-[88px] -translate-x-1/2 items-center rounded-[32px] border-2 border-[#c9c8c8] bg-linear-to-r from-[#b9b8b8] via-[#bfb4b8] via-30% to-[#bfbebd] px-[5px] shadow-[0_0_80px_rgba(0,0,0,0.32)]">
    {apps.map((a) => <DockItem key={a.n} {...a} />)}
    <span className="mx-[15px] h-16 w-[2px] bg-[#8f8d8d]" />
    {pinned.map((a) => <DockItem key={a.n} {...a} run />)}
    <span className="mx-[15px] h-16 w-[2px] bg-[#8f8d8d]" />
    <button aria-label="CSV file" className="grid w-[68px] place-items-center">
      <svg viewBox="0 0 44 62" className="h-[62px] w-11">
        <path d="M1 0h27l15 21v41H1z" fill="#ededed" /><path d="M28 0v21h15z" fill="#fff" stroke="#c8c8c8" />
        <path d="M4 6h18M4 10h20M4 14h16M4 18h20M4 22h18M4 26h24M4 30h20M4 34h34M4 38h18M4 42h30M4 46h12" stroke="#c4c4c4" strokeWidth="2" />
        <text x="22" y="57" textAnchor="middle" fontFamily="Inter, sans-serif" fontSize="9" fill="#666">CSV</text>
      </svg>
    </button>
    <button aria-label="Trash" className="grid w-[70px] place-items-center">
      <svg viewBox="0 0 48 62" className="h-[62px] w-12">
        <path d="M1 7h46l-6 50c-1 6-33 6-34 0z" fill="#d6d7d8" /><path d="M10 12l4 44M24 12v46M38 12l-5 44" stroke="#e6e6e6" strokeWidth="3" />
        <path d="M4 8l8-6 6 5 8-7 6 6 7-4 5 6-4 7H8z" fill="#f4f4f4" /><path d="M12 9l6-5 5 8-9 3zM28 9l8-4 3 8-9 2zM22 4l4-2 2 5z" fill="#5b5f63" />
        <ellipse cx="24" cy="10" rx="23" ry="5" fill="none" stroke="#e9e9e9" strokeWidth="2" />
      </svg>
    </button>
  </div>
);

/* ---------- desktop behind the browser ---------- */

const Field = ({ label, value, className }: { label: string; value?: string; className: string }) => (
  <div className={`flex h-9 items-center gap-[33px] rounded-full border-2 border-[#8a8a8a] px-[18px] text-[20px] text-[#2e2e2e] ${className}`}>
    {label}{value && <b className="text-[21px] font-semibold">{value}</b>}
  </div>
);

const DesktopStrip = () => (
  <div className="relative h-[99px] shrink-0 overflow-hidden">
    <svg className="absolute inset-0 size-full" preserveAspectRatio="none" aria-hidden="true">
      <filter id="grass" colorInterpolationFilters="sRGB"><feTurbulence type="fractalNoise" baseFrequency="0.03 0.1" numOctaves="4" seed="4" /><feColorMatrix values="0.9 0 0 0 -0.03  0.85 0 0 0 -0.03  0.75 0 0 0 -0.04  0 0 0 0 1" /></filter>
      <rect width="100%" height="100%" filter="url(#grass)" />
      <rect x="26.7%" width="20%" height="100%" fill="#78002f" opacity=".85" />
    </svg>
    <div className="relative flex h-[73px] items-center rounded-b-[20px] bg-linear-to-b from-[#555555] via-[#a8a8a8] via-45% to-[#ececec] pt-[3px] pl-[17px]">
      <Field label="SUM" value="0" className="w-[285px]" />
      <Field label="AVERAGE" className="ml-[17px] w-[330px]" />
      <Field label="MIN" value="0" className="ml-[17px] w-[285px]" />
      <button aria-label="Summary settings" className="ml-auto flex h-[42px] w-[86px] items-center justify-center gap-1 rounded-[8px] border-2 border-[#999]">
        <svg viewBox="0 0 30 30" className="size-[30px]" fill="none" stroke="#111">
          <circle cx="15" cy="15" r="10.500" strokeWidth="2.500" /><circle cx="15" cy="15" r="13" strokeWidth="2.500" strokeDasharray="2.500 2.600" />
          <path d="M15 15h10M15 15L9 6M15 15L9 24" strokeWidth="2" /><circle cx="15" cy="15" r="2.500" fill="#111" />
        </svg>
        <svg viewBox="0 0 16 16" className="size-4" fill="none" stroke="#111" strokeWidth="2.600"><path d="M2 5l6 6 6-6" /></svg>
      </button>
      <div className="ml-3 h-full w-[542px] border-l border-[#8c8c8c]" />
    </div>
  </div>
);

export default function App() {
  return (
    <div className="relative flex h-screen flex-col overflow-hidden bg-[#8b8f92] font-[Inter,sans-serif]">
      <MenuBar />
      <div className="relative z-0 flex min-h-0 flex-1 flex-col">
        <div className="flex min-h-0 flex-1 flex-col overflow-hidden rounded-[22px] border-y border-black bg-white">
          <TabStrip />
          <Toolbar />
          <BookmarkBar />
          <Dashboard />
        </div>
        <FindBar />
      </div>
      <DesktopStrip />
      <Dock />
    </div>
  );
}
